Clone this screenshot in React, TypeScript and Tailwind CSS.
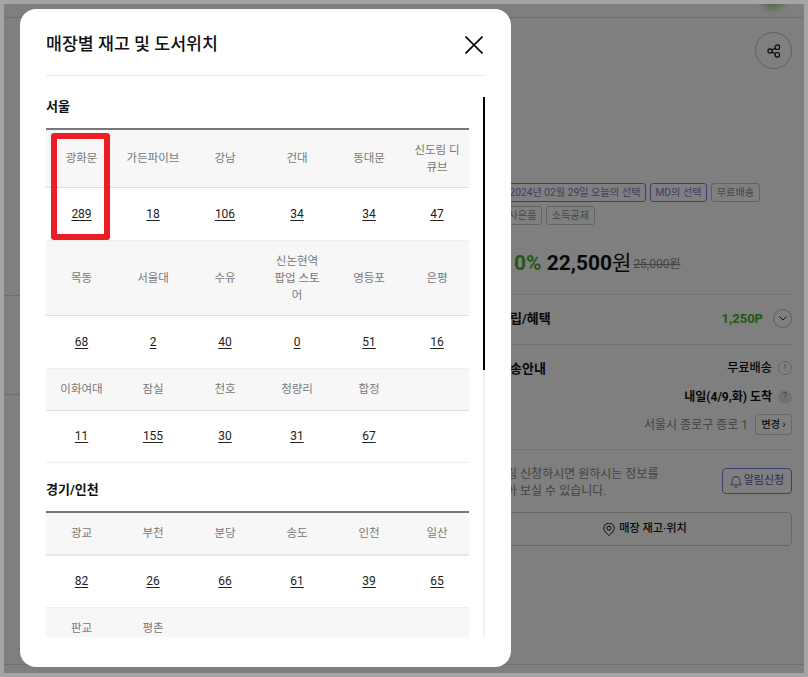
import React from 'react';

const fontStack = { fontFamily: 'Roboto, "Noto Sans CJK KR", sans-serif' };

interface StoreRow {
  names: string[];
  counts: number[];
  tight?: boolean;
  thick?: boolean;
}

interface Region {
  title: string;
  rows: StoreRow[];
}

const regions: Region[] = [
  {
    title: '서울',
    rows: [
      { names: ['광화문', '가든파이브', '강남', '건대', '동대문', '신도림 디큐브'], counts: [289, 18, 106, 34, 34, 47], tight: true },
      { names: ['목동', '서울대', '수유', '신논현역 팝업 스토어', '영등포', '은평'], counts: [68, 2, 40, 0, 51, 16], tight: true },
      { names: ['이화여대', '잠실', '천호', '청량리', '합정', ''], counts: [11, 155, 30, 31, 67] },
    ],
  },
  {
    title: '경기/인천',
    rows: [
      { names: ['광교', '부천', '분당', '송도', '인천', '일산'], counts: [82, 26, 66, 61, 39, 65], thick: true },
      { names: ['판교', '평촌', '', '', '', ''], counts: [] },
    ],
  },
];

const StoreTable: React.FC<{ region: Region }> = ({ region }) => (
  <section>
    <h3 className="mb-3 pt-px text-[13px] leading-[18px] font-bold text-[#111]">{region.title}</h3>
    <table className="w-full table-fixed border-collapse border-t-2 border-[#777]">
      <colgroup>
        <col className="w-[71px]" />
        <col className="w-[72px]" />
        <col className="w-[72px]" />
        <col className="w-[72px]" />
        <col className="w-[72px]" />
        <col className="w-[64px]" />
      </colgroup>
      <tbody>
        {region.rows.map((row) => (
          <React.Fragment key={row.names[0]}>
            <tr className="bg-[#f7f7f7]">
              {row.names.map((name, i) => (
                <td
                  key={i}
                  className={`px-[8.5px] text-center text-[11.5px] leading-[17px] font-normal text-[#777] last:px-[6px] ${
                    row.tight ? 'py-[11.5px]' : 'py-3'
                  } ${row.thick ? 'border-b-2 border-[#e6e6e6]' : 'border-b border-[#dedede]'}`}
                >
                  {name}
                </td>
              ))}
            </tr>
            {row.counts.length > 0 && (
              <tr>
                {row.names.map((name, i) => (
                  <td
                    key={i}
                    className={`border-b border-[#eeeeee] px-2 text-center text-[12px] leading-[17px] text-[#222] ${
                      row.tight ? 'py-[17.5px]' : 'py-[17px]'
                    }`}
                  >
                    {name && <a className="underline underline-offset-2">{row.counts[i]}</a>}
                  </td>
                ))}
              </tr>
            )}
          </React.Fragment>
        ))}
      </tbody>
    </table>
  </section>
);

const StoreModal: React.FC = () => (
  <div className="absolute top-[5px] left-4 h-[658px] w-[491px] rounded-2xl bg-white pl-[26px]">
    <div className="flex h-[67px] w-[439px] items-center justify-between border-b border-[#e9e9e9] pt-[5px]">
      <h2 className="text-[17.3px] font-medium text-[#111]">매장별 재고 및 도서위치</h2>
      <button className="mr-[2px]">
        <svg width="18" height="18" viewBox="0 0 18 18" fill="none" stroke="#000" strokeWidth="1.6" className="block">
          <path d="M.5.5l17 17M17.500.5l-17 17" />
        </svg>
      </button>
    </div>
    <div className="mt-[21px] flex h-[540px] w-[439px] justify-between">
      <div className="flex h-full w-[423px] flex-col gap-[17px] overflow-hidden">
        {regions.map((region) => (
          <StoreTable key={region.title} region={region} />
        ))}
      </div>
      <div className="h-full w-[2px] bg-[#f0f0f0]">
        <div className="h-[273px] w-full bg-black" />
      </div>
    </div>
    {/* 캡처에 표시된 빨간 강조 박스 */}
    <div className="absolute top-[124px] left-[31px] h-[107px] w-[59px] rounded-[3px] border-[6px] border-[#ee1c25]" />
  </div>
);

const Badge: React.FC<{ children: React.ReactNode; navy?: boolean }> = ({ children, navy }) => (
  <span
    className={`flex h-[19px] items-center rounded-[3px] border px-[4.5px] text-[10.2px] whitespace-nowrap ${
      navy ? 'border-[#7a80e0] text-[#7a7ec8]' : 'border-[#c4c4c4] text-[#909090]'
    }`}
  >
    {children}
  </span>
);

const ProductColumn: React.FC = () => (
  <div className="ml-auto mr-3 w-[294px] text-[#111]">
    <div className="mt-[14px] flex justify-end">
      <div className="flex h-[37px] w-[37px] items-center justify-center rounded-full border border-[#bbb]">
        <svg width="14" height="14" viewBox="0 0 14 14" fill="none" stroke="#111" strokeWidth="1.2">
          <circle cx="3" cy="7" r="2.1" />
          <circle cx="10.3" cy="3.2" r="2.3" />
          <circle cx="10.3" cy="10.8" r="2.3" />
          <path d="M4.9 6 8.2 4.2M4.9 8 8.2 9.800" />
        </svg>
      </div>
    </div>
    <div className="mt-[114px] flex gap-1 pl-[6px]">
      <Badge navy>2024년 02월 29일 오늘의 선택</Badge>
      <Badge navy>MD의 선택</Badge>
      <Badge>무료배송</Badge>
    </div>
    <div className="mt-[4px] flex gap-1 pl-[5px]">
      <Badge>사은품</Badge>
      <Badge>소득공제</Badge>
    </div>
    <div className="mt-[27px] flex h-[24px] items-center whitespace-nowrap">
      <span className="ml-[4px] text-[21px] font-bold text-[#4caf2a]">10%</span>
      <span className="ml-[5px] text-[21px] font-bold">22,500</span>
      <span className="text-[21px]">원</span>
      <span className="ml-[2px] text-[12px] text-[#888] line-through">25,000원</span>
    </div>
    <div className="mt-[18px] flex h-[50px] items-center justify-between border-t border-[#e5e5e5] pb-[2px]">
      <span className="text-[13px] font-bold">적립/혜택</span>
      <div className="flex items-center gap-[10px]">
        <span className="text-[13px] font-bold text-[#4caf2a]">1,250P</span>
        <span className="flex h-[19px] w-[19px] items-center justify-center rounded-full border border-[#bbb]">
          <svg width="8" height="5" viewBox="0 0 8 5" fill="none" stroke="#222" strokeWidth="1">
            <path d="M.5.5 4 4 7.500.5" />
          </svg>
        </span>
      </div>
    </div>
    <div className="border-t border-[#e5e5e5] pt-[14px] pb-[14px]">
      <div className="flex h-[19px] items-center justify-between">
        <span className="text-[13px] font-bold">배송안내</span>
        <div className="flex items-center gap-[6px]">
          <span className="text-[12.200px] font-medium">무료배송</span>
          <span className="flex h-[14px] w-[14px] items-center justify-center rounded-full border border-[#ccc] text-[9px] text-[#999]">!</span>
        </div>
      </div>
      <div className="mt-[9px] flex h-[19px] items-center justify-end gap-[6px]">
        <span className="text-[12px] font-bold">내일(4/9,화) 도착</span>
        <span className="flex h-[14px] w-[14px] items-center justify-center rounded-full bg-[#e5e5e5] text-[9px] text-[#888]">?</span>
      </div>
      <div className="mt-[8px] flex h-[21px] items-center justify-end gap-[7px]">
        <span className="text-[12px] text-[#888]">서울시 종로구 종로 1</span>
        <span className="flex h-[21px] w-[37px] items-center justify-center rounded-[3px] border border-[#ccc] text-[10px] font-medium">변경 ›</span>
      </div>
    </div>
    <div className="flex items-start justify-between border-t border-[#e5e5e5] pt-[13px]">
      <p className="mt-[3px] -ml-[3px] text-[12px] leading-[17px] text-[#888]">
        알림 신청하시면 원하시는 정보를
        <br />
        받아 보실 수 있습니다.
      </p>
      <span className="mt-[5px] flex h-[26px] w-[70px] items-center justify-center gap-[2px] rounded-[4px] border border-[#7a80e0] text-[11px] text-[#5a5e9e]">
        <svg width="12" height="13" viewBox="0 0 12 13" fill="none" stroke="#444a88" strokeWidth="0.8">
          <path d="M.8 9.800c1.200-1.200 1.400-2.400 1.400-4.600a3.800 3.800 0 0 1 7.600 0c0 2.200.2 3.400 1.400 4.600H.8ZM4.200 12h3.600" />
        </svg>
        알림신청
      </span>
    </div>
    <div className="mt-[12px] flex h-[34px] items-center justify-center gap-[4px] rounded-[5px] border border-[#ccc] text-[11.2px] font-medium">
      <svg width="12" height="13" viewBox="0 0 12 13" fill="none" stroke="#111" strokeWidth="1">
        <path d="M6 12.500S.8 8.500.8 5.300a5.200 5.200 0 0 1 10.400 0C11.200 8.500 6 12.500 6 12.500Z" />
        <circle cx="6" cy="5.200" r="2" />
      </svg>
      매장 재고·위치
    </div>
  </div>
);

export default function App() {
  return (
    <div className="h-[677px] w-[808px] overflow-hidden bg-[#a5a5a5] p-1" style={fontStack}>
      <div className="relative h-[669px] w-[800px] overflow-hidden bg-white">
        <div className="relative h-[14px] overflow-hidden border-b border-[#ddd]">
          <div className="absolute -top-[20px] left-[756px] h-[26px] w-[26px] rounded-full bg-[#b4dca0] blur-[3px]" />
        </div>
        <div className="flex h-[647px] border-b border-[#ddd]">
          <div className="w-[300px]">
            <div className="h-[278px] border-b border-[#ddd]" />
            <div className="h-[99px] border-b border-[#ddd]" />
          </div>
          <ProductColumn />
        </div>
        <div className="absolute inset-0 bg-black/50" />
        <StoreModal />
      </div>
    </div>
  );
}
